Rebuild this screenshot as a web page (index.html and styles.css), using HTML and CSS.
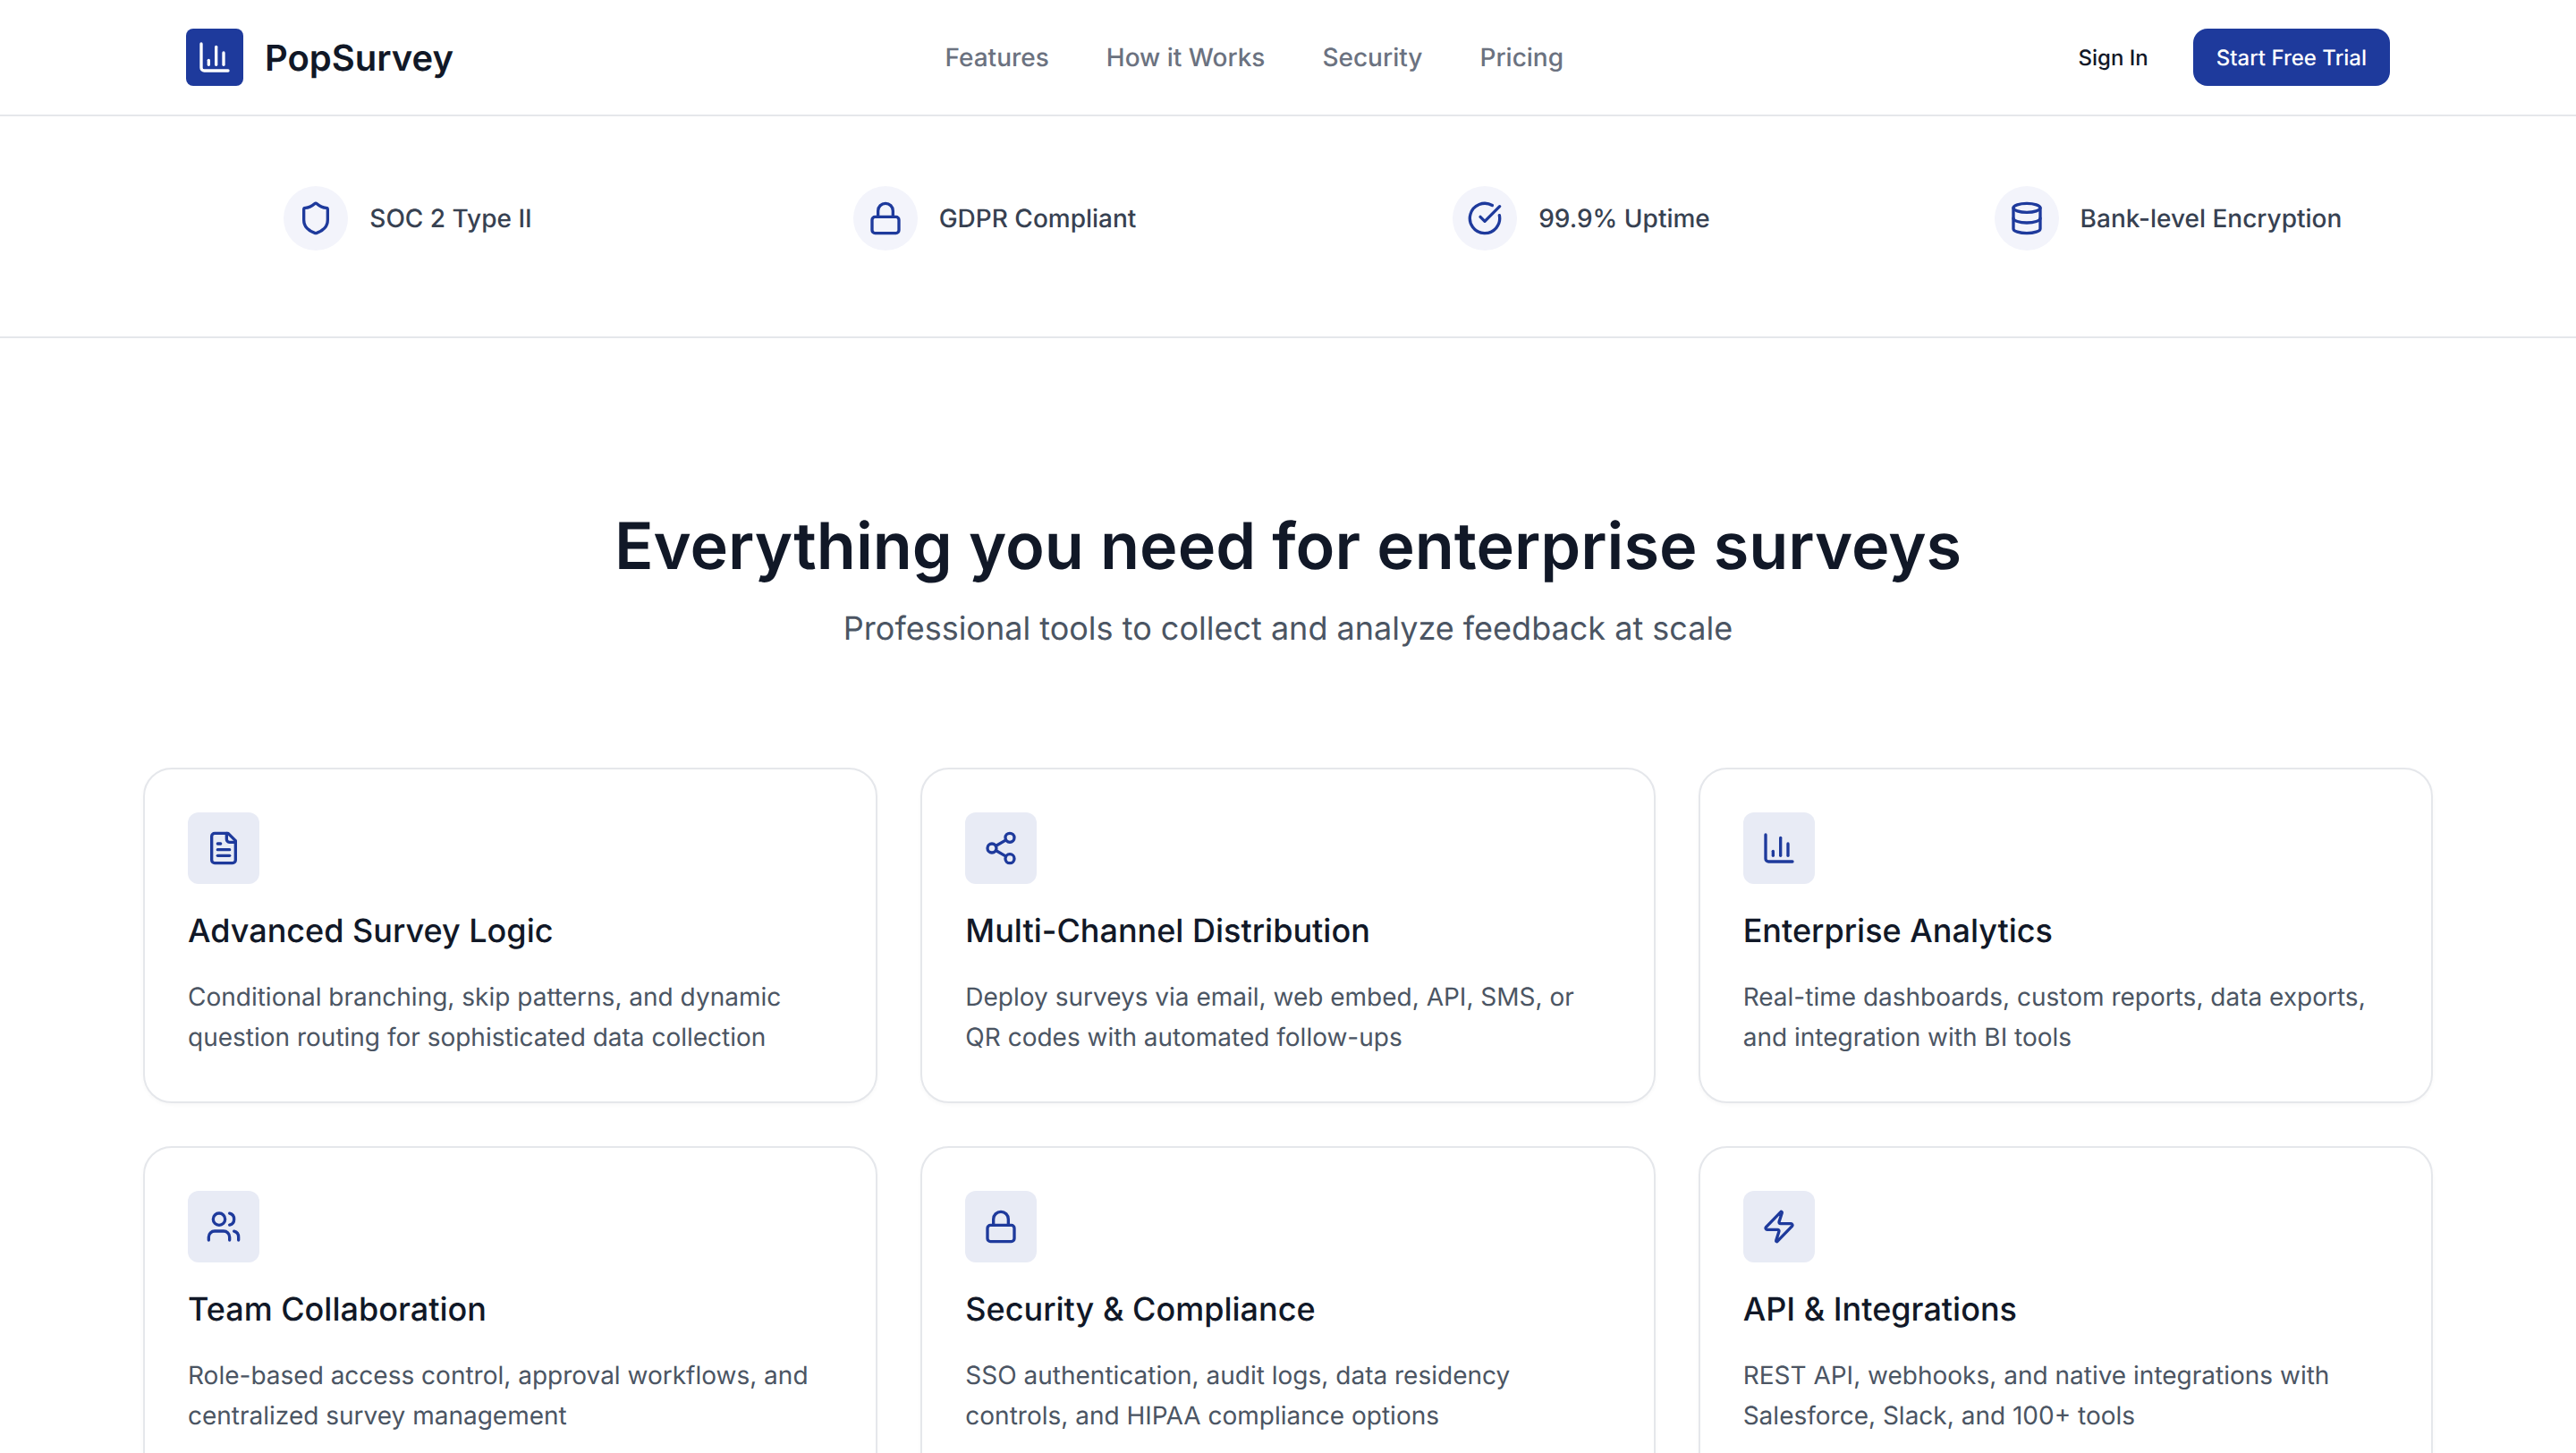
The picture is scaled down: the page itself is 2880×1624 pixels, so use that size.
FILE: index.html
```html
<!DOCTYPE html>
<html>
<head>
  <link rel="stylesheet" href="styles.css">
</head>
<body>
  <header class="nav">
    <div class="nav-inner">
      <a class="logo">
        <span class="logo-mark">
          <svg class="icon" viewBox="0 0 24 24"><path d="M3 3v16a2 2 0 0 0 2 2h16"/><path d="M18 17V9"/><path d="M13 17V5"/><path d="M8 17v-3"/></svg>
        </span>
        <span class="logo-text">PopSurvey</span>
      </a>
      <nav class="nav-links">
        <a>Features</a>
        <a>How it Works</a>
        <a>Security</a>
        <a>Pricing</a>
      </nav>
      <div class="nav-actions">
        <a class="sign-in">Sign In</a>
        <a class="btn-primary">Start Free Trial</a>
      </div>
    </div>
  </header>

  <section class="trust">
    <div class="trust-grid">
      <div class="trust-item">
        <span class="trust-icon">
          <svg class="icon" viewBox="0 0 24 24"><path d="M20 13c0 5-3.5 7.5-7.66 8.95a1 1 0 0 1-.67-.01C7.5 20.5 4 18 4 13V6a1 1 0 0 1 1-1c2 0 4.5-1.2 6.24-2.72a1.17 1.17 0 0 1 1.52 0C14.51 3.81 17 5 19 5a1 1 0 0 1 1 1z"/></svg>
        </span>
        <span>SOC 2 Type II</span>
      </div>
      <div class="trust-item">
        <span class="trust-icon">
          <svg class="icon" viewBox="0 0 24 24"><rect x="3" y="11" width="18" height="11" rx="2"/><path d="M7 11V7a5 5 0 0 1 10 0v4"/></svg>
        </span>
        <span>GDPR Compliant</span>
      </div>
      <div class="trust-item">
        <span class="trust-icon">
          <svg class="icon" viewBox="0 0 24 24"><path d="M21.801 10A10 10 0 1 1 17 3.335"/><path d="m9 11 3 3L22 4"/></svg>
        </span>
        <span>99.9% Uptime</span>
      </div>
      <div class="trust-item">
        <span class="trust-icon">
          <svg class="icon" viewBox="0 0 24 24"><ellipse cx="12" cy="5" rx="9" ry="3"/><path d="M3 5V19A9 3 0 0 0 21 19V5"/><path d="M3 12A9 3 0 0 0 21 12"/></svg>
        </span>
        <span>Bank-level Encryption</span>
      </div>
    </div>
  </section>

  <section class="features">
    <div class="features-header">
      <h2>Everything you need for enterprise surveys</h2>
      <p>Professional tools to collect and analyze feedback at scale</p>
    </div>
    <div class="features-grid">
      <article class="card">
        <span class="card-icon">
          <svg class="icon" viewBox="0 0 24 24"><path d="M15 2H6a2 2 0 0 0-2 2v16a2 2 0 0 0 2 2h12a2 2 0 0 0 2-2V7Z"/><path d="M14 2v4a2 2 0 0 0 2 2h4"/><path d="M10 9H8"/><path d="M16 13H8"/><path d="M16 17H8"/></svg>
        </span>
        <h3>Advanced Survey Logic</h3>
        <p>Conditional branching, skip patterns, and dynamic question routing for sophisticated data collection</p>
      </article>
      <article class="card">
        <span class="card-icon">
          <svg class="icon" viewBox="0 0 24 24"><circle cx="18" cy="5" r="3"/><circle cx="6" cy="12" r="3"/><circle cx="18" cy="19" r="3"/><line x1="8.59" y1="13.51" x2="15.42" y2="17.49"/><line x1="15.41" y1="6.51" x2="8.59" y2="10.49"/></svg>
        </span>
        <h3>Multi-Channel Distribution</h3>
        <p>Deploy surveys via email, web embed, API, SMS, or QR codes with automated follow-ups</p>
      </article>
      <article class="card">
        <span class="card-icon">
          <svg class="icon" viewBox="0 0 24 24"><path d="M3 3v16a2 2 0 0 0 2 2h16"/><path d="M18 17V9"/><path d="M13 17V5"/><path d="M8 17v-3"/></svg>
        </span>
        <h3>Enterprise Analytics</h3>
        <p>Real-time dashboards, custom reports, data exports, and integration with BI tools</p>
      </article>
      <article class="card">
        <span class="card-icon">
          <svg class="icon" viewBox="0 0 24 24"><path d="M16 21v-2a4 4 0 0 0-4-4H6a4 4 0 0 0-4 4v2"/><circle cx="9" cy="7" r="4"/><path d="M22 21v-2a4 4 0 0 0-3-3.87"/><path d="M16 3.13a4 4 0 0 1 0 7.75"/></svg>
        </span>
        <h3>Team Collaboration</h3>
        <p>Role-based access control, approval workflows, and centralized survey management</p>
      </article>
      <article class="card">
        <span class="card-icon">
          <svg class="icon" viewBox="0 0 24 24"><rect x="3" y="11" width="18" height="11" rx="2"/><path d="M7 11V7a5 5 0 0 1 10 0v4"/></svg>
        </span>
        <h3>Security &amp; Compliance</h3>
        <p>SSO authentication, audit logs, data residency controls, and HIPAA compliance options</p>
      </article>
      <article class="card">
        <span class="card-icon">
          <svg class="icon" viewBox="0 0 24 24"><path d="M4 14a1 1 0 0 1-.78-1.63l9.9-10.2a.5.5 0 0 1 .86.46l-1.92 6.02A1 1 0 0 0 13 10h7a1 1 0 0 1 .78 1.63l-9.9 10.2a.5.5 0 0 1-.86-.46l1.92-6.02A1 1 0 0 0 11 14z"/></svg>
        </span>
        <h3>API &amp; Integrations</h3>
        <p>REST API, webhooks, and native integrations with Salesforce, Slack, and 100+ tools</p>
      </article>
    </div>
  </section>
</body>
</html>
```

FILE: styles.css
```css
* {
  box-sizing: border-box;
}

html, body {
  height: 100%;
  overflow: hidden;
}

body {
  margin: 0;
  background: #fff;
  color: #111827;
  font-family: Inter, "Noto Sans", sans-serif;
  text-rendering: geometricPrecision;
}

.icon {
  width: 40px;
  height: 40px;
  fill: none;
  stroke: currentColor;
  stroke-width: 2;
  stroke-linecap: round;
  stroke-linejoin: round;
}

/* Top navigation */
.nav {
  border-bottom: 2px solid #e5e7eb;
}

.nav-inner {
  display: flex;
  align-items: center;
  justify-content: space-between;
  max-width: 2560px;
  height: 128px;
  margin: 0 auto;
  padding: 0 48px;
}

.logo {
  display: flex;
  align-items: center;
  gap: 24px;
}

.logo-mark {
  display: flex;
  align-items: center;
  justify-content: center;
  width: 64px;
  height: 64px;
  background: #1e3a9c;
  border-radius: 8px;
  color: #fff;
}

.logo-text {
  font-size: 40px;
  font-weight: 600;
  color: #111827;
}

.nav-links {
  display: flex;
  gap: 64px;
}

.nav-links a {
  font-size: 28px;
  font-weight: 500;
  color: #6b7280;
}

.nav-actions {
  display: flex;
  align-items: center;
  gap: 24px;
}

.sign-in {
  padding: 0 26px;
  font-size: 24px;
  font-weight: 500;
  color: #111827;
}

.btn-primary {
  display: flex;
  align-items: center;
  height: 64px;
  padding: 0 26px;
  background: #1e3a9c;
  border-radius: 16px;
  color: #fff;
  font-size: 24px;
  font-weight: 500;
}

/* Trust badges */
.trust {
  padding: 78px 0 96px;
  border-bottom: 2px solid #e5e7eb;
}

.trust-grid {
  display: grid;
  grid-template-columns: repeat(4, 1fr);
  gap: 64px;
  max-width: 2560px;
  margin: 0 auto;
}

.trust-item {
  display: flex;
  align-items: center;
  justify-content: center;
  gap: 24px;
  font-size: 28px;
  font-weight: 500;
  color: #374151;
}

.trust-icon {
  display: flex;
  align-items: center;
  justify-content: center;
  width: 72px;
  height: 72px;
  background: #f3f4fb;
  border-radius: 50%;
  color: #1e3a9c;
}

/* Features */
.features {
  max-width: 2560px;
  margin: 0 auto;
  padding-top: 190px;
}

.features-header {
  margin-bottom: 126px;
  text-align: center;
}

.features-header h2 {
  margin: 0 0 20px;
  font-size: 72px;
  font-weight: 600;
  line-height: 1.2;
  color: #111827;
}

.features-header p {
  margin: 0;
  font-size: 36px;
  line-height: 1.6;
  color: #4b5563;
}

.features-grid {
  display: grid;
  grid-template-columns: repeat(3, 1fr);
  gap: 48px;
}

.card {
  padding: 48px;
  background: #fff;
  border: 2px solid #e5e7eb;
  border-radius: 32px;
  box-shadow: 0 2px 4px rgba(0, 0, 0, 0.03);
}

.card-icon {
  display: flex;
  align-items: center;
  justify-content: center;
  width: 80px;
  height: 80px;
  margin-bottom: 24px;
  background: #e8ebf5;
  border-radius: 12px;
  color: #1e3a9c;
}

.card h3 {
  margin: 0 0 22.4px;
  font-size: 36px;
  font-weight: 500;
  line-height: 1.6;
  color: #111827;
}

.card p {
  margin: 0;
  padding-bottom: 0.6px;
  font-size: 28px;
  line-height: 45px;
  color: #4b5563;
}
```
